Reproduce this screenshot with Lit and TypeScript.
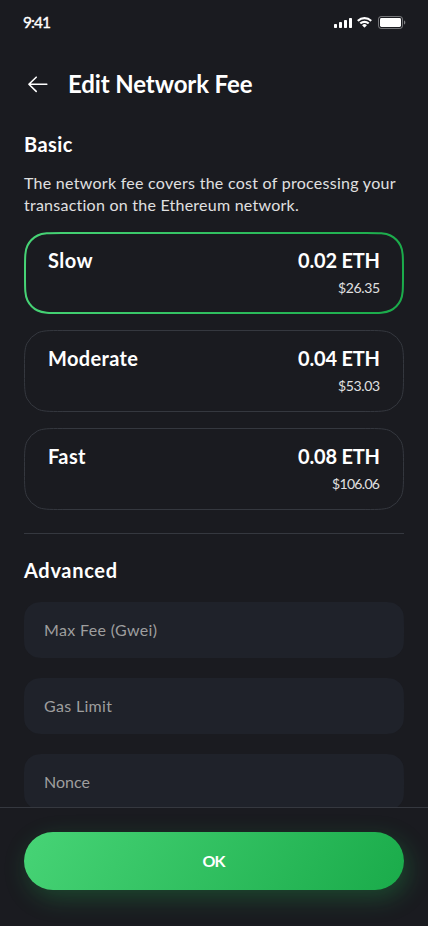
import { LitElement, html, css, svg } from "lit";
import { customElement, property, state } from "lit/decorators.js";
import { classMap } from "lit/directives/class-map.js";
import { styleMap } from "lit/directives/style-map.js";

/** Rounded rectangle whose corners ease into the sides (60% smoothing). */
function smoothRect(x: number, y: number, w: number, h: number, r: number): string {
  const rad = Math.PI / 180;
  const p = Math.min(1.6 * r, h / 2);
  const arc = Math.sin(18 * rad) * r * Math.SQRT2;
  const c = r * Math.tan(13.5 * rad) * Math.cos(27 * rad);
  const d = c * Math.tan(27 * rad);
  const b = (p - arc - c - d) / 3;
  const a = 2 * b;
  const e = a + b + c;
  return [
    `M${x + w - p} ${y}`,
    `c${a} 0 ${a + b} 0 ${e} ${d}a${r} ${r} 0 0 1 ${arc} ${arc}c${d} ${c} ${d} ${b + c} ${d} ${e}`,
    `V${y + h - p}`,
    `c0 ${a} 0 ${a + b} ${-d} ${e}a${r} ${r} 0 0 1 ${-arc} ${arc}c${-c} ${d} ${-(b + c)} ${d} ${-e} ${d}`,
    `H${x + p}`,
    `c${-a} 0 ${-(a + b)} 0 ${-e} ${-d}a${r} ${r} 0 0 1 ${-arc} ${-arc}c${-d} ${-c} ${-d} ${-(b + c)} ${-d} ${-e}`,
    `V${y + p}`,
    `c0 ${-a} 0 ${-(a + b)} ${d} ${-e}a${r} ${r} 0 0 1 ${arc} ${-arc}c${c} ${-d} ${b + c} ${-d} ${e} ${-d}Z`,
  ].join("");
}

/** One line of text, tracked so that it fills the given width. */
@customElement("text-line")
export class TextLine extends LitElement {
  @property() text = "";
  @property({ type: Number }) width = 0;
  @state() private tracking = 0;

  static styles = css`
    :host {
      display: block;
    }
    .line {
      display: inline-block;
      white-space: pre;
      vertical-align: top;
    }
  `;

  protected firstUpdated() {
    const line = this.renderRoot.querySelector(".line") as HTMLElement;
    const natural = line.getBoundingClientRect().width;
    this.tracking = (this.width - natural) / (this.text.length - 1);
  }

  render() {
    const style = { letterSpacing: `${this.tracking}px`, marginRight: `${-this.tracking}px` };
    return html`<span class="line" style=${styleMap(style)}>${this.text}</span>`;
  }
}

@customElement("status-bar")
export class StatusBar extends LitElement {
  static styles = css`
    :host {
      display: flex;
      justify-content: space-between;
      height: 44px;
      padding: 0 22px 0 23px;
      box-sizing: border-box;
      font-family: "Open Sans", Lato, sans-serif;
      font-family: Lato, sans-serif;
      font-size: 15.5px;
      font-weight: 400;
      line-height: 20px;
    }
    .clock {
      padding-top: 12px;
      -webkit-text-stroke: 0.35px #fff;
    }
    .icons {
      display: block;
      margin-top: 15px;
    }
  `;

  render() {
    return html`
      <text-line class="clock" text="9:41" width="28"></text-line>
      <svg class="icons" width="72" height="15" viewBox="0 0 72 15" fill="#fff">
        <rect x="0" y="9" width="3" height="4" rx="0.7" />
        <rect x="5" y="7" width="3" height="6" rx="0.7" />
        <rect x="10" y="5" width="3" height="8" rx="0.7" />
        <rect x="15" y="3" width="3" height="10" rx="0.7" />
        <path
          d="M30.5 4.2c2.15 0 4.2.83 5.75 2.3.12.12.3.12.42 0l1.12-1.14a.32.32 0 0 0 0-.46 10.55 10.55 0 0 0-14.58 0 .32.32 0 0 0 0 .46l1.12 1.14c.12.12.3.12.42 0A8.35 8.35 0 0 1 30.5 4.200z"
        />
        <path
          d="M30.5 7.9c1.17 0 2.3.44 3.17 1.22.12.11.3.11.42 0l1.12-1.14a.32.32 0 0 0 0-.46 6.87 6.87 0 0 0-9.42 0 .32.32 0 0 0 0 .46l1.12 1.14c.12.11.3.11.42 0a4.74 4.74 0 0 1 3.17-1.22z"
        />
        <path
          d="M32.7 10.4c.13-.13.12-.34-.01-.46a3.46 3.46 0 0 0-4.38 0 .32.32 0 0 0-.01.46l1.98 2c.12.12.32.12.44 0z"
        />
        <rect x="44.5" y="1.5" width="24" height="12" rx="2.6" fill="none" stroke="#fff" stroke-opacity="0.4" />
        <path d="M70 5.500v4c.8-.34 1.330-1.130 1.330-2s-.53-1.660-1.330-2z" fill-opacity="0.45" />
        <rect x="46" y="3" width="21" height="9" rx="1.4" />
      </svg>
    `;
  }
}

@customElement("fee-option")
export class FeeOption extends LitElement {
  @property() name = "";
  @property() amount = "";
  @property() fiat = "";
  @property({ type: Array }) widths: number[] = [0, 0, 0];
  @property({ type: Boolean }) selected = false;

  static styles = css`
    :host {
      display: block;
    }
    .card {
      position: relative;
      display: flex;
      justify-content: space-between;
      height: 82px;
      padding: 14px 24px 0;
      box-sizing: border-box;
    }
    .frame {
      position: absolute;
      inset: 0;
      fill: none;
      stroke: #35383f;
      stroke-width: 1;
    }
    .selected .frame {
      stroke: url(#edge);
      stroke-width: 2;
    }
    .name,
    .amount {
      font-size: 20px;
      font-weight: 700;
      line-height: 28px;
    }
    .cost {
      display: flex;
      flex-direction: column;
      align-items: flex-end;
    }
    .fiat {
      font-size: 14px;
      line-height: 20px;
      margin-top: 4px;
      color: #e0e0e0;
    }
  `;

  render() {
    const inset = this.selected ? 1 : 0.5;
    return html`
      <div class=${classMap({ card: true, selected: this.selected })}>
        <svg class="frame" width="380" height="82" viewBox="0 0 380 82">
          ${svg`<defs>
            <linearGradient id="edge" gradientUnits="userSpaceOnUse" x1="20" y1="0" x2="360" y2="82">
              <stop offset="0" stop-color="#46d375" />
              <stop offset="1" stop-color="#1bac4b" />
            </linearGradient>
          </defs>
          <path d=${smoothRect(inset, inset, 380 - 2 * inset, 82 - 2 * inset, 24 - inset)} />`}
        </svg>
        <text-line class="name" text=${this.name} width=${this.widths[0]}></text-line>
        <div class="cost">
          <text-line class="amount" text=${this.amount} width=${this.widths[1]}></text-line>
          <text-line class="fiat" text=${this.fiat} width=${this.widths[2]}></text-line>
        </div>
      </div>
    `;
  }
}

@customElement("fee-field")
export class FeeField extends LitElement {
  @property() label = "";
  @property({ type: Number }) width = 0;

  static styles = css`
    :host {
      display: block;
    }
    .field {
      position: relative;
      height: 56px;
      padding: 17px 20px 0;
      box-sizing: border-box;
      font-size: 16px;
      line-height: 22px;
      color: #9e9e9e;
    }
    .fill {
      position: absolute;
      inset: 0;
      fill: #1f222a;
    }
    .label {
      position: relative;
    }
  `;

  render() {
    return html`
      <div class="field">
        <svg class="fill" width="380" height="56" viewBox="0 0 380 56">
          ${svg`<path d=${smoothRect(0, 0, 380, 56, 16)} />`}
        </svg>
        <text-line class="label" text=${this.label} width=${this.width}></text-line>
      </div>
    `;
  }
}

@customElement("app-root")
export class AppRoot extends LitElement {
  static styles = css`
    :host {
      display: flex;
      flex-direction: column;
      width: 428px;
      height: 926px;
      overflow: hidden;
      background: #1a1b20;
      color: #fff;
      font-family: Lato, "Open Sans", sans-serif;
    }
    .header {
      display: flex;
      align-items: center;
      gap: 16px;
      height: 48px;
      margin-top: 16px;
      padding: 0 24px;
      flex: none;
    }
    .back {
      width: 28px;
      height: 28px;
      flex: none;
    }
    .title {
      font-size: 24px;
      font-weight: 700;
      line-height: 32px;
      margin-top: -1px;
    }
    .content {
      flex: 1;
      min-height: 0;
      overflow: hidden;
      padding: 22px 24px 0;
    }
    .heading {
      font-size: 20px;
      font-weight: 700;
      line-height: 28px;
    }
    .copy {
      margin-top: 14px;
      font-size: 16px;
      line-height: 22px;
      color: #e0e0e0;
    }
    .options {
      display: flex;
      flex-direction: column;
      gap: 16px;
      margin-top: 16px;
    }
    .divider {
      height: 1px;
      margin: 23px 0 22px;
      background: #35383f;
    }
    .fields {
      display: flex;
      flex-direction: column;
      gap: 20px;
      margin-top: 18px;
    }
    .footer {
      flex: none;
      height: 119px;
      box-sizing: border-box;
      padding: 24px 24px 0;
      border-top: 1px solid #35383f;
    }
    .ok {
      display: flex;
      align-items: center;
      justify-content: center;
      width: 100%;
      height: 58px;
      padding: 0;
      border: 0;
      border-radius: 29px;
      background: linear-gradient(122deg, #46d375 2%, #1bac4b 98%);
      box-shadow: 4px 8px 24px rgba(36, 206, 92, 0.25);
      color: #fff;
      font: 700 16px/22px Lato, "Open Sans", sans-serif;
    }
  `;

  render() {
    return html`
      <status-bar></status-bar>
      <div class="header">
        <svg class="back" viewBox="0 0 28 28" fill="none" stroke="#fff" stroke-width="1.6" stroke-linecap="round" stroke-linejoin="round">
          <path d="M22.800 14.300H4.900M12.200 7.200L4.900 14.300l7.300 7.100" />
        </svg>
        <text-line class="title" text="Edit Network Fee" width="184.500"></text-line>
      </div>
      <div class="content">
        <text-line class="heading" text="Basic" width="48.500"></text-line>
        <div class="copy">
          <text-line text="The network fee covers the cost of processing your" width="371.500"></text-line>
          <text-line text="transaction on the Ethereum network." width="275"></text-line>
        </div>
        <div class="options">
          <fee-option selected name="Slow" amount="0.02 ETH" fiat="$26.35" .widths=${[44.5, 82, 42]}></fee-option>
          <fee-option name="Moderate" amount="0.04 ETH" fiat="$53.03" .widths=${[90, 82, 42]}></fee-option>
          <fee-option name="Fast" amount="0.08 ETH" fiat="$106.06" .widths=${[37.5, 82, 48]}></fee-option>
        </div>
        <div class="divider"></div>
        <text-line class="heading" text="Advanced" width="93"></text-line>
        <div class="fields">
          <fee-field label="Max Fee (Gwei)" width="113"></fee-field>
          <fee-field label="Gas Limit" width="68"></fee-field>
          <fee-field label="Nonce" width="46"></fee-field>
        </div>
      </div>
      <div class="footer">
        <button class="ok"><text-line text="OK" width="23"></text-line></button>
      </div>
    `;
  }
}
